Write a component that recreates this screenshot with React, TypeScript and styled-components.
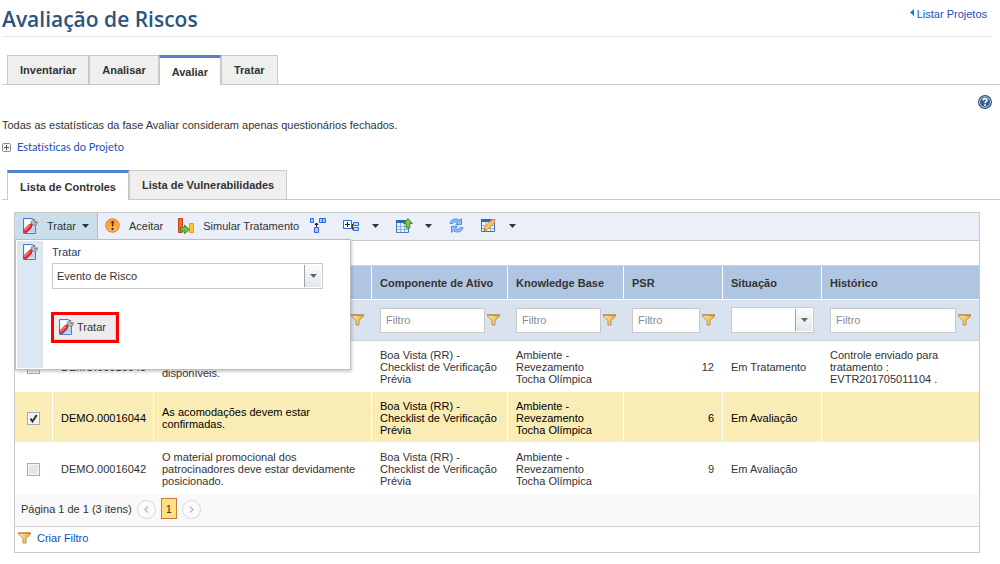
import React from "react";
import styled, { createGlobalStyle } from "styled-components";

const GlobalStyle = createGlobalStyle`
  * { box-sizing: border-box; }
  body {
    margin: 0;
    background: #fff;
    color: #333;
    font: 11px/12px "Liberation Sans", Arial, sans-serif;
  }
  button, input, select { font: inherit; color: inherit; margin: 0; }
  svg { display: block; flex: none; }
`;

const Page = styled.div`
  padding-left: 2px;
`;

const Header = styled.header`
  display: flex;
  justify-content: space-between;
  height: 37px;
  margin-right: 8px;
  border-bottom: 1px solid #e2eaf3;
`;

const Title = styled.h1`
  margin: 0;
  padding-top: 4px;
  font: 600 21px/30px "Open Sans", "Noto Sans", sans-serif;
  color: #2b547e;
`;

const BackLink = styled.a`
  display: flex;
  gap: 3px;
  padding: 8px 5px 0 0;
  color: #1a50b8;
  text-decoration: none;
`;

const TabBar = styled.div<{ $top: number }>`
  display: flex;
  height: 30px;
  margin-top: ${(p) => p.$top}px;
  padding-left: 5px;
  border-bottom: 1px solid #c9c9c9;
`;

const Tab = styled.button<{ $active?: boolean }>`
  height: ${(p) => (p.$active ? 30 : 29)}px;
  padding: ${(p) => (p.$active ? "1px 12px 0" : "0 12px")};
  border: 1px solid #c9c9c9;
  border-top: ${(p) => (p.$active ? "3px solid #4f83d0" : "1px solid #c9c9c9")};
  border-bottom: 0;
  background: ${(p) => (p.$active ? "#fff" : "#efefef")};
  font-weight: bold;
`;

const HelpRow = styled.div`
  display: flex;
  justify-content: flex-end;
  padding: 10px 8px 0 0;
`;

const IconButton = styled.button`
  display: flex;
  align-items: center;
  padding: 0;
  border: 0;
  background: none;
`;

const Note = styled.p`
  margin: 10px 0 0;
`;

const StatsToggle = styled.button`
  display: flex;
  align-items: center;
  gap: 6px;
  height: 16px;
  margin-top: 8px;
  padding: 0;
  border: 0;
  background: none;
  color: #1a50b8;
  font: 11px/16px Lato, "Open Sans", sans-serif;
  font-variant-ligatures: none;
`;

const Grid = styled.section`
  margin: 12px 20px 0 12px;
  border: 1px solid #c9c9c9;
`;

const Toolbar = styled.div`
  position: relative;
  display: flex;
  align-items: stretch;
  height: 28px;
  border-bottom: 1px solid #c9c9c9;
  background: #eaeff8;
`;

const ToolButton = styled.button<{ $open?: boolean }>`
  display: flex;
  align-items: center;
  gap: 9px;
  padding: 0 8px 2px 7px;
  border: 0;
  border-right: ${(p) => (p.$open ? "1px solid #9dbfdd" : "0")};
  background: ${(p) => (p.$open ? "#cadeec" : "none")};
`;

const ToolLabel = styled.span`
  display: flex;
  align-items: center;
  gap: 6px;
`;

const IconTool = styled(ToolButton)`
  padding: 0 7px 2px 3px;
`;

const SplitButton = styled(ToolButton)`
  gap: 12px;
  padding: 0 8px 2px 9px;
`;

const Menu = styled.div`
  position: absolute;
  top: 26px;
  left: 0;
  z-index: 1;
  display: flex;
  width: 336px;
  height: 131px;
  padding: 1px;
  border: 1px solid #bdbdbd;
  background: #fff;
  box-shadow: 1px 2px 3px rgba(0, 0, 0, 0.2);
`;

const MenuRail = styled.div`
  display: flex;
  justify-content: center;
  width: 26px;
  padding-top: 3px;
  background: #dbe8f2;
`;

const MenuBody = styled.form`
  display: flex;
  flex-direction: column;
  align-items: flex-start;
  padding: 5px 0 0 9px;
`;

const MenuLabel = styled.label`
  color: #24405e;
  margin-bottom: 5px;
`;

const Highlight = styled.div`
  margin: 23px 0 0 -1px;
  border: 3px solid #f00;
`;

const TreatButton = styled.button`
  display: flex;
  align-items: center;
  gap: 3px;
  height: 25px;
  padding: 0 9px 0 4px;
  border: 1px solid #d2d2d2;
  border-width: 0 1px 1px 0;
  background: #ececec;
`;

const ComboBox = styled.span<{ $width: string }>`
  display: grid;
  grid-template-columns: 1fr 18px;
  width: ${(p) => p.$width};
  height: 26px;
  border: 1px solid #c9c9c9;
  background: #fff;
`;

const ComboSelect = styled.select`
  grid-area: 1 / 1 / 2 / 3;
  appearance: none;
  min-width: 0;
  padding: 0 22px 0 4px;
  border: 0;
  background: none;
`;

const ComboArrow = styled.span`
  grid-area: 1 / 2 / 2 / 3;
  display: flex;
  align-items: center;
  justify-content: center;
  margin: 1px 1px 1px 0;
  border-left: 1px solid #9aa3ae;
  background: linear-gradient(#f9fafb, #e4e7ea);
  pointer-events: none;
`;

const GroupPanel = styled.div`
  height: 24px;
`;

const Table = styled.table`
  width: 100%;
  table-layout: fixed;
  border-collapse: separate;
  border-spacing: 0;
  border-top: 1px solid #d2d2d2;
`;

const HeadCell = styled.th`
  height: 34px;
  padding: 0 7px 0 8px;
  border-right: 1px solid #fff;
  border-bottom: 1px solid #fff;
  background: #b0c5e1;
  text-align: left;
  white-space: nowrap;
  &:last-child { border-right: 0; }
`;

const FilterCell = styled.td`
  height: 41px;
  padding: 0 8px;
  border-bottom: 1px solid #d2d2d2;
  background: #d8e3ef;
`;

const FilterBox = styled.div`
  display: flex;
  align-items: center;
  gap: 2px;
`;

const FilterInput = styled.input`
  flex: 1;
  min-width: 0;
  height: 25px;
  padding: 0 5px;
  border: 1px solid #c9c9c9;
  background: #fff;
  &::placeholder { color: #8c8c8c; opacity: 1; }
`;

const Row = styled.tr<{ $selected?: boolean }>`
  color: ${(p) => (p.$selected ? "#000" : "#333")};
  background: ${(p) => (p.$selected ? "#faecb5" : "#fff")};
`;

const Cell = styled.td<{ $align?: string }>`
  height: 51px;
  padding: 8px 8px 6px;
  border-right: 1px solid #fff;
  border-bottom: 1px solid #fff;
  text-align: ${(p) => p.$align || "left"};
  white-space: pre-line;
  &:last-child { border-right: 0; }
`;

const CheckBox = styled.input`
  appearance: none;
  display: block;
  width: 13px;
  height: 13px;
  margin: 0 auto;
  border: 1px solid #a5abb5;
  background: #e6e6e6;
  box-shadow: inset 0 0 0 1px #f7f7f7;
  &:checked {
    background: #f1f1f1 url("data:image/svg+xml,%3Csvg xmlns='http://www.w3.org/2000/svg' viewBox='0 0 11 11'%3E%3Cpath d='M2.5 5.5l2 3L8.700 2' fill='none' stroke='%23333' stroke-width='2'/%3E%3C/svg%3E");
  }
`;

const Pager = styled.nav`
  display: flex;
  align-items: center;
  gap: 5px;
  height: 32px;
  padding-left: 6px;
  background: #f9f9f9;
`;

const PagerText = styled.span`
  margin-bottom: 3px;
`;

const PageArrow = styled.button`
  display: flex;
  align-items: center;
  justify-content: center;
  width: 19px;
  height: 19px;
  margin-bottom: 2px;
  padding: 0;
  border: 1px solid #d8d8d8;
  border-radius: 50%;
  background: #fbfbfb;
`;

const PageNumber = styled.button`
  width: 16px;
  height: 21px;
  margin-bottom: 3px;
  padding: 0;
  border: 1px solid #c47f35;
  background: #ffdf85;
`;

const Footer = styled.footer`
  display: flex;
  height: 26px;
  padding: 5px 3px 0;
  border-top: 1px solid #d2d2d2;
`;

const FilterLink = styled.a`
  display: flex;
  gap: 6px;
  color: #1152b5;
  text-decoration: none;
`;

const Caret = ({ color = "#333" }: { color?: string }) => (
  <svg width="7" height="4" viewBox="0 0 7 4"><path d="M0 0h7L3.500 4z" fill={color} /></svg>
);

const TreatIcon = () => (
  <svg width="16" height="16" viewBox="0 0 16 16">
    <path d="M1.500 .5h9l3 3v12h-12z" fill="#e8f2fd" stroke="#4a7cc4" />
    <path d="M3 2h7v5L3 13z" fill="#fff" />
    <path d="M3 14.500h10V8z" fill="#b5d3f5" />
    <path d="M8 8l3.500-3.500" stroke="#666" strokeWidth="2.800" />
    <path d="M9.500 5.500C8.500 3 10.500 1 13 1.500L11.800 3.500l1.200 1.200 2.300-1c.5 2.500-2 4.500-4 3.500z" fill="#bdbdbd" stroke="#686868" strokeWidth=".8" />
    <path d="M3.500 12.800l4.500-4.500" stroke="#d02a34" strokeWidth="4.600" strokeLinecap="round" />
    <path d="M3 12.200l4.500-4.500" stroke="#fb7070" strokeWidth="1.800" strokeLinecap="round" />
  </svg>
);

const AcceptIcon = () => (
  <svg width="15" height="15" viewBox="0 0 15 15">
    <defs>
      <radialGradient id="warn" cx=".5" cy=".7" r=".7">
        <stop offset="0" stopColor="#ffc55a" /><stop offset="1" stopColor="#f07c1c" />
      </radialGradient>
    </defs>
    <circle cx="7.500" cy="7.500" r="6.700" fill="url(#warn)" stroke="#e0701a" />
    <circle cx="7.500" cy="7.500" r="5.500" fill="none" stroke="#ffd08a" strokeWidth=".8" />
    <path d="M6.500 3h2.200l-.5 5.500H7z" fill="#4d2a10" />
    <circle cx="7.500" cy="11" r="1.200" fill="#4d2a10" />
  </svg>
);

const SimulateIcon = () => (
  <svg width="16" height="16" viewBox="0 0 16 16">
    <path d="M.5.500h4v14h-4z" fill="#f0693a" stroke="#c9401c" />
    <path d="M11.500 5.500h4v9h-4z" fill="#fbc62f" stroke="#e89a1a" />
    <path d="M2.500 9.500H6.500V7l5 4.500L6.500 15.700v-2.500h-4z" fill="#78bd4a" stroke="#3d8a28" />
  </svg>
);

const HierarchyIcon = () => (
  <svg width="17" height="16" viewBox="0 0 17 16">
    <g fill="#a9cbfa" stroke="#2f68dc">
      <path d="M.5.500h3v4h-3zM9.500.500h3v4h-3zM12.500.500h3v4h-3zM4.500 9.500h4v5h-4z" />
    </g>
    <path d="M6.500 9V5M5 6.500L6.500 5 8 6.500z" stroke="#222" fill="#222" />
  </svg>
);

const GroupIcon = () => (
  <svg width="17" height="14" viewBox="0 0 17 14">
    <path d="M.5 1.500h8v8h-8z" fill="#fff" stroke="#2f68dc" />
    <path d="M2 5.500h5M4.500 3v5" stroke="#222" />
    <path d="M9 5.500h2M9.500 5v5.500h2" fill="none" stroke="#333" />
    <path d="M10.500 3.500h5v3h-5zM10.500 8.500h5v3h-5z" fill="#c6dcfb" stroke="#2f68dc" />
  </svg>
);

const ExportIcon = () => (
  <svg width="17" height="16" viewBox="0 0 17 16">
    <path d="M.5 2.500h12v12H.5z" fill="#e6f1fc" stroke="#4a7ab8" />
    <path d="M0 2h13v3H0z" fill="#3466a8" />
    <path d="M1 8.500h11M1 11.500h11M4.500 5v9M8.500 5v9" stroke="#8fb4dc" />
    <path d="M12 .7l4.300 4.800h-2.500V10h-3.600V5.500H7.700z" fill="#84c24a" stroke="#3f8423" />
  </svg>
);

const RefreshIcon = () => (
  <svg width="15" height="15" viewBox="0 0 15 15" fill="#8ebcf5" stroke="#3f7fd2" strokeWidth=".8">
    <path d="M1 5.500C1.500 1.500 6.500-.5 10.500 2.200L12.500.7v6H6.700l1.800-2C6.500 3 4.500 4 4 5.500z" />
    <path d="M14 9.500c-.5 4-5.500 6-9.500 3.300L2.500 14.300v-6h5.800l-1.800 2c2 1.700 4 .7 4.500-.8z" />
  </svg>
);

const EditIcon = () => (
  <svg width="16" height="15" viewBox="0 0 16 15">
    <path d="M.5 1.500h13v12H.5z" fill="#e6f1fc" stroke="#3f72b5" />
    <path d="M0 1h14v3H0z" fill="#3466a8" />
    <path d="M1 7.500h12M1 10.500h12M5 4v9M9.500 4v9" stroke="#8fb4dc" />
    <path d="M3 12.500l1-3.800L11 1.500l3 2.700-7.500 7.300z" fill="#fbc757" stroke="#c98428" strokeWidth=".8" />
    <path d="M10.800 1.800L12 .6l2.800 2.500-1.200 1.300z" fill="#ee9d80" />
    <path d="M3 12.500l.5-1.500 1 1z" fill="#333" />
  </svg>
);

const FunnelIcon = () => (
  <svg width="13" height="12" viewBox="0 0 13 12">
    <defs>
      <linearGradient id="funnel"><stop offset="0" stopColor="#fff0b8" /><stop offset="1" stopColor="#eda92a" /></linearGradient>
    </defs>
    <path d="M.5 1h12v1L8 6.500v4.500H5V6.500L.5 2z" fill="url(#funnel)" stroke="#c08d45" />
    <path d="M0 1h13" stroke="#b87a4a" />
  </svg>
);

const HelpIcon = () => (
  <svg width="14" height="14" viewBox="0 0 14 14">
    <circle cx="7" cy="7" r="6.400" fill="#d6e2ee" stroke="#2f5583" strokeWidth="1.200" />
    <circle cx="7" cy="7" r="5" fill="#2f5f96" />
    <path d="M5 5.500C5 3 9 3 9 5.300 9 6.700 7 6.700 7 8.300M7 9.300v1.600" fill="none" stroke="#fff" strokeWidth="1.600" />
  </svg>
);

const PlusIcon = () => (
  <svg width="9" height="9" viewBox="0 0 9 9">
    <rect x=".5" y=".5" width="8" height="8" rx="1" fill="#f4f4f4" stroke="#8a8a8a" />
    <path d="M2 4.500h5M4.500 2v5" stroke="#555" />
  </svg>
);

const Chevron = ({ left }: { left?: boolean }) => (
  <svg width="5" height="7" viewBox="0 0 5 7">
    <path d={left ? "M4 .5l-3 3 3 3" : "M1 .5l3 3-3 3"} fill="none" stroke="#bdbdbd" strokeWidth="1.500" />
  </svg>
);

const TextFilter = ({ label }: { label: string }) => (
  <FilterBox>
    <FilterInput placeholder="Filtro" aria-label={label} />
    <IconButton aria-label={label}><FunnelIcon /></IconButton>
  </FilterBox>
);

const columnWidths = [38, 101, 218, 136, 116, 99, 99];

const component = "Boa Vista (RR) -\nChecklist de Verificação\nPrévia";
const base = "Ambiente -\nRevezamento\nTocha Olímpica";
const rows = [
  { id: "DEMO.00016043", control: "\ndisponíveis.", psr: 12, status: "Em Tratamento", history: "Controle enviado para tratamento :\nEVTR201705011104 .", checked: false },
  { id: "DEMO.00016044", control: "As acomodações devem estar confirmadas.", psr: 6, status: "Em Avaliação", history: "", checked: true },
  { id: "DEMO.00016042", control: "O material promocional dos patrocinadores deve estar devidamente posicionado.", psr: 9, status: "Em Avaliação", history: "", checked: false },
];

export default function App() {
  return (
    <Page>
      <GlobalStyle />
      <Header>
        <Title>Avaliação de Riscos</Title>
        <BackLink href="#projetos">
          <svg width="4" height="9" viewBox="0 0 4 9"><path d="M4 1v7L0 4.500z" fill="#0b86cc" /></svg>
          Listar Projetos
        </BackLink>
      </Header>
      <TabBar $top={18}>
        <Tab>Inventariar</Tab>
        <Tab>Analisar</Tab>
        <Tab $active>Avaliar</Tab>
        <Tab>Tratar</Tab>
      </TabBar>
      <HelpRow><IconButton aria-label="Ajuda"><HelpIcon /></IconButton></HelpRow>
      <Note>Todas as estatísticas da fase Avaliar consideram apenas questionários fechados.</Note>
      <StatsToggle><PlusIcon />Estatísticas do Projeto</StatsToggle>
      <TabBar $top={15}>
        <Tab $active>Lista de Controles</Tab>
        <Tab>Lista de Vulnerabilidades</Tab>
      </TabBar>
      <Grid>
        <Toolbar>
          <ToolButton $open>
            <TreatIcon />
            <ToolLabel>Tratar <Caret /></ToolLabel>
          </ToolButton>
          <ToolButton><AcceptIcon />Aceitar</ToolButton>
          <ToolButton><SimulateIcon />Simular Tratamento</ToolButton>
          <IconTool aria-label="Hierarquia"><HierarchyIcon /></IconTool>
          <SplitButton aria-label="Agrupar"><GroupIcon /><Caret /></SplitButton>
          <SplitButton aria-label="Exportar"><ExportIcon /><Caret /></SplitButton>
          <SplitButton aria-label="Atualizar"><RefreshIcon /></SplitButton>
          <SplitButton aria-label="Editar colunas"><EditIcon /><Caret /></SplitButton>
          <Menu>
            <MenuRail><TreatIcon /></MenuRail>
            <MenuBody>
              <MenuLabel htmlFor="treat-kind">Tratar</MenuLabel>
              <ComboBox $width="271px">
                <ComboSelect id="treat-kind"><option>Evento de Risco</option></ComboSelect>
                <ComboArrow><Caret color="#5f6670" /></ComboArrow>
              </ComboBox>
              <Highlight>
                <TreatButton type="button"><TreatIcon />Tratar</TreatButton>
              </Highlight>
            </MenuBody>
          </Menu>
        </Toolbar>
        <GroupPanel />
        <Table>
          <colgroup>
            {columnWidths.map((width, i) => <col key={i} width={width} />)}
            <col />
          </colgroup>
          <thead>
            <tr>
              <HeadCell /><HeadCell /><HeadCell />
              <HeadCell>Componente de Ativo</HeadCell>
              <HeadCell>Knowledge Base</HeadCell>
              <HeadCell>PSR</HeadCell>
              <HeadCell>Situação</HeadCell>
              <HeadCell>Histórico</HeadCell>
            </tr>
            <tr>
              <FilterCell />
              <FilterCell />
              <FilterCell><TextFilter label="Filtrar controle" /></FilterCell>
              <FilterCell><TextFilter label="Filtrar componente de ativo" /></FilterCell>
              <FilterCell><TextFilter label="Filtrar knowledge base" /></FilterCell>
              <FilterCell><TextFilter label="Filtrar PSR" /></FilterCell>
              <FilterCell>
                <ComboBox $width="100%">
                  <ComboSelect aria-label="Filtrar situação"><option /></ComboSelect>
                  <ComboArrow><Caret color="#5f6670" /></ComboArrow>
                </ComboBox>
              </FilterCell>
              <FilterCell><TextFilter label="Filtrar histórico" /></FilterCell>
            </tr>
          </thead>
          <tbody>
            {rows.map((row) => (
              <Row key={row.id} $selected={row.checked}>
                <Cell><CheckBox type="checkbox" defaultChecked={row.checked} aria-label={row.id} /></Cell>
                <Cell>{row.id}</Cell>
                <Cell>{row.control}</Cell>
                <Cell>{component}</Cell>
                <Cell>{base}</Cell>
                <Cell $align="right">{row.psr}</Cell>
                <Cell>{row.status}</Cell>
                <Cell>{row.history}</Cell>
              </Row>
            ))}
          </tbody>
        </Table>
        <Pager>
          <PagerText>Página 1 de 1 (3 itens)</PagerText>
          <PageArrow aria-label="Página anterior"><Chevron left /></PageArrow>
          <PageNumber>1</PageNumber>
          <PageArrow aria-label="Próxima página"><Chevron /></PageArrow>
        </Pager>
        <Footer>
          <FilterLink href="#filtro"><FunnelIcon />Criar Filtro</FilterLink>
        </Footer>
      </Grid>
    </Page>
  );
}
